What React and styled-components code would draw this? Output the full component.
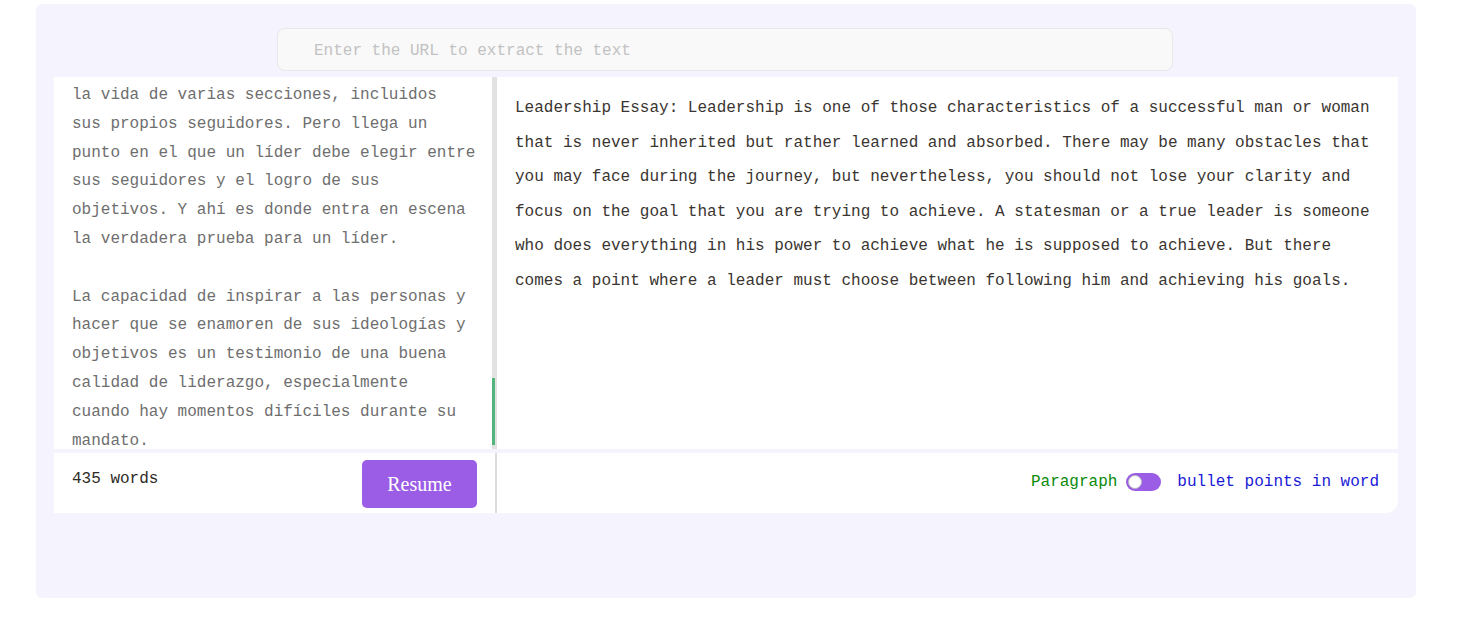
import React, { useState } from 'react';
import styled, { createGlobalStyle } from 'styled-components';

const GlobalStyle = createGlobalStyle`
  body {
    margin: 0;
    background: #fff;
    font-family: "Liberation Mono", "DejaVu Sans Mono", monospace;
  }
`;

const Page = styled.div`
  padding: 4px 66px 22px 36px;
`;

const Shell = styled.div`
  background: #f5f3fd;
  border-radius: 6px;
  height: 594px;
  box-sizing: border-box;
  padding: 24px 18px 0;
  display: flex;
  flex-direction: column;
`;

const UrlInput = styled.input`
  align-self: center;
  width: 896px;
  height: 43px;
  box-sizing: border-box;
  margin: 0 0 0 -2px;
  border: 1px solid #e8e8e8;
  border-radius: 8px;
  background: #f9f9f9;
  padding: 2px 36px 0;
  font: 16px "Liberation Mono", monospace;
  color: #333;
  outline: none;

  &::placeholder {
    color: #c2c2c2;
  }
`;

const Board = styled.div`
  margin-top: 6px;
  display: flex;
  flex-direction: column;
  gap: 4px;
`;

const Row = styled.div`
  display: flex;
  height: ${p => p.h}px;
`;

const SourcePane = styled.div`
  width: 438px;
  box-sizing: border-box;
  background: #fff;
  padding: 4px 10px 0 18px;
  overflow: hidden;
  white-space: pre-line;
  font-size: 16px;
  line-height: 28.8px;
  color: #6e6e6e;
`;

const Track = styled.div`
  width: 5px;
  background: #e2e2e2;
  display: flex;
  flex-direction: column;
  justify-content: flex-end;
  padding-bottom: 4px;
  box-sizing: border-box;
`;

const Thumb = styled.div`
  width: 3px;
  height: 67px;
  background: #52b57c;
`;

const ResultPane = styled.div`
  flex: 1;
  background: #fff;
  padding: 14px 18px 0;
  font-size: 16px;
  line-height: 34.6px;
  color: #3a3530;
`;

const LeftFoot = styled.div`
  width: 441px;
  box-sizing: border-box;
  background: #fff;
  padding: 7px 18px 0;
  display: flex;
  justify-content: space-between;
  align-items: flex-start;
`;

const WordCount = styled.span`
  padding-top: 9px;
  font-size: 16px;
  line-height: 20px;
  color: #2e2a26;
`;

const ResumeButton = styled.button`
  width: 115px;
  height: 48px;
  border: none;
  border-radius: 5px;
  background: #9b5de5;
  color: #fff;
  font: 20px "Liberation Serif", serif;
  cursor: pointer;
`;

const Divider = styled.div`
  width: 2px;
  background: #dcdcdc;
`;

const RightFoot = styled.div`
  flex: 1;
  background: #fff;
  border-bottom-right-radius: 12px;
  padding: 19px 19px 0;
  display: flex;
  justify-content: flex-end;
  align-items: flex-start;
`;

const ModeSwitch = styled.div`
  display: flex;
  align-items: center;
  height: 20px;
  font-size: 16px;
`;

const ModeLabel = styled.span`
  color: ${p => p.color};
`;

const Toggle = styled.button`
  width: 35px;
  height: 18px;
  margin: 0 16px 0 9px;
  padding: 0 2px;
  border: none;
  border-radius: 9px;
  background: #9b5de5;
  display: flex;
  align-items: center;
  justify-content: ${p => (p.on ? 'flex-end' : 'flex-start')};
  cursor: pointer;
`;

const Knob = styled.span`
  width: 14px;
  height: 14px;
  box-sizing: border-box;
  border-radius: 50%;
  background: #fff;
  border: 1px solid #b8b8c0;
`;

const sourceText = `la vida de varias secciones, incluidos
sus propios seguidores. Pero llega un
punto en el que un líder debe elegir entre
sus seguidores y el logro de sus
objetivos. Y ahí es donde entra en escena
la verdadera prueba para un líder.

La capacidad de inspirar a las personas y
hacer que se enamoren de sus ideologías y
objetivos es un testimonio de una buena
calidad de liderazgo, especialmente
cuando hay momentos difíciles durante su
mandato.`;

const resultText =
  'Leadership Essay: Leadership is one of those characteristics of a successful man or woman that is never inherited but rather learned and absorbed. There may be many obstacles that you may face during the journey, but nevertheless, you should not lose your clarity and focus on the goal that you are trying to achieve. A statesman or a true leader is someone who does everything in his power to achieve what he is supposed to achieve. But there comes a point where a leader must choose between following him and achieving his goals.';

export default function App() {
  const [bullets, setBullets] = useState(false);

  return (
    <Page>
      <GlobalStyle />
      <Shell>
        <UrlInput placeholder="Enter the URL to extract the text" />
        <Board>
          <Row h={372}>
            <SourcePane>{sourceText}</SourcePane>
            <Track>
              <Thumb />
            </Track>
            <ResultPane>{resultText}</ResultPane>
          </Row>
          <Row h={60}>
            <LeftFoot>
              <WordCount>435 words</WordCount>
              <ResumeButton>Resume</ResumeButton>
            </LeftFoot>
            <Divider />
            <RightFoot>
              <ModeSwitch>
                <ModeLabel color="#0a8a0a">Paragraph</ModeLabel>
                <Toggle on={bullets ? 1 : 0} onClick={() => setBullets(!bullets)}>
                  <Knob />
                </Toggle>
                <ModeLabel color="#1a1ad6">bullet points in word</ModeLabel>
              </ModeSwitch>
            </RightFoot>
          </Row>
        </Board>
      </Shell>
    </Page>
  );
}
